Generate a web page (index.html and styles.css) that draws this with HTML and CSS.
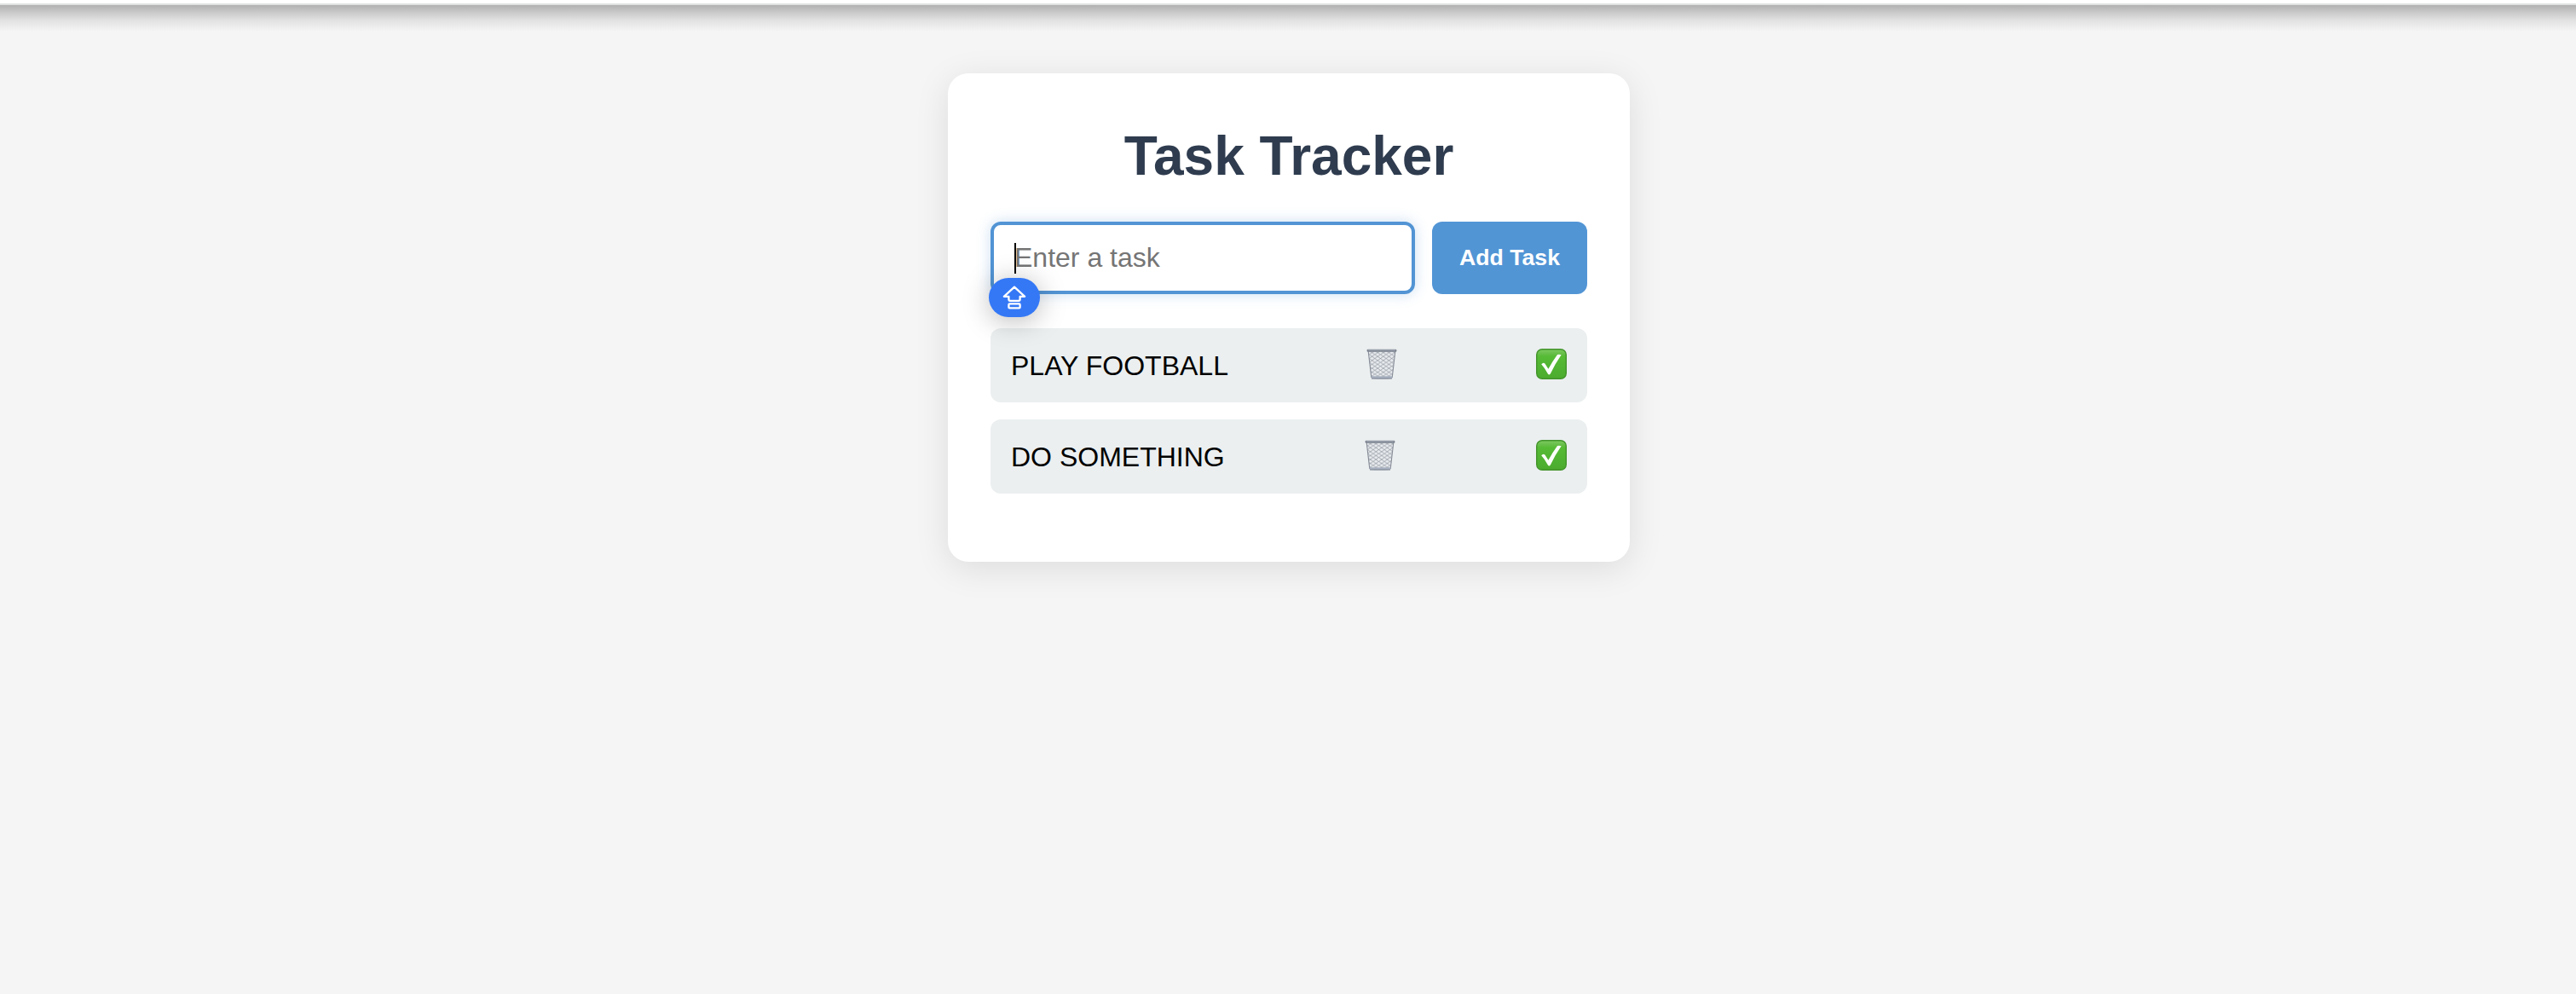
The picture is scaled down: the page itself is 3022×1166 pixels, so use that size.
FILE: index.html
```html
<!DOCTYPE html>
<html lang="en">
<head>
<meta charset="utf-8">
<title>Task Tracker</title>
<link rel="stylesheet" href="styles.css">
</head>
<body>
<svg class="symbols" aria-hidden="true">
  <defs>
    <linearGradient id="green" x1="0" y1="0" x2="0" y2="1">
      <stop offset="0" stop-color="#7ccb5e"/>
      <stop offset=".14" stop-color="#68bf4a"/>
      <stop offset=".24" stop-color="#56bb35"/>
      <stop offset="1" stop-color="#4bab2e"/>
    </linearGradient>
    <pattern id="mesh" width="6.6" height="4.6" patternUnits="userSpaceOnUse">
      <path d="M0 0L6.6 4.6M0 4.6L6.6 0" stroke="#8b919b" stroke-width=".75" fill="none"/>
    </pattern>
    <symbol id="bin" viewBox="0 0 36 36">
      <path d="M2.2 3L5.8 34.4H30.2L33.8 3Z" fill="#e9ecef"/>
      <path d="M2.2 3L5.8 34.4H30.2L33.8 3Z" fill="url(#mesh)"/>
      <path d="M2.2 3L5.8 34M33.8 3L30.2 34" stroke="#858b96" stroke-width="1.1" fill="none"/>
      <path d="M5.6 32.2H30.4L30.1 35Q18 36 5.9 35Z" fill="#a9b2c1"/>
      <path d="M6 35H30" stroke="#757c89" stroke-width=".9"/>
      <rect x=".6" y=".8" width="34.8" height="3" rx="1.2" fill="#7b838f"/>
      <path d="M2 1.8H34" stroke="#a8b0bb" stroke-width=".9"/>
    </symbol>
    <symbol id="check" viewBox="0 0 36 36">
      <rect x=".7" y=".7" width="34.6" height="34.6" rx="6.5" fill="url(#green)" stroke="#43942c" stroke-width="1.4"/>
      <path d="M6.2 18.2Q8.6 15.4 10.4 17.6L14.4 23.8Q19.5 14.5 25 7Q27.5 6.3 29.6 7.3Q22.5 17.5 16.8 29.4Q15.2 31.4 13.9 29.4Q10.3 22.7 6.2 18.2Z" fill="#fff"/>
    </symbol>
  </defs>
</svg>
<div class="toolbar-edge"></div>
<main class="card">
  <h1 class="title">Task Tracker</h1>
  <div class="form">
    <div class="field">
      <span class="caret"></span><span class="placeholder">Enter a task</span>
      <span class="caps">
        <svg class="caps-icon" viewBox="0 0 28 28" fill="none" stroke="#fff" stroke-width="2.3" stroke-linejoin="round"><path d="M14 1.6L1.8 12.8H7.4V16Q7.4 17.8 9 17.8H19Q20.6 17.8 20.6 16V12.8H26.2Z"/><rect x="7.4" y="21.4" width="13.2" height="5" rx="1"/></svg>
      </span>
    </div>
    <button class="add">Add Task</button>
  </div>
  <ul class="tasks">
    <li class="task"><span class="name">PLAY FOOTBALL</span><svg class="emoji"><use href="#bin"/></svg><svg class="emoji"><use href="#check"/></svg></li>
    <li class="task"><span class="name">DO SOMETHING</span><svg class="emoji"><use href="#bin"/></svg><svg class="emoji"><use href="#check"/></svg></li>
  </ul>
</main>
</body>
</html>
```
FILE: styles.css
```css
* { box-sizing: border-box; }
body {
  margin: 0;
  height: 1166px;
  overflow: hidden;
  background: #f5f5f5;
  font-family: "Liberation Sans", Arial, sans-serif;
  font-size: 32px;
}
.symbols { position: absolute; width: 0; height: 0; }
.toolbar-edge {
  height: 38px;
  border-top: 4px solid #fff;
  background: linear-gradient(#e0e2e1 2px, #b0b0b0 2px, #c8c8c8 10px, #e2e2e2 20px, #f5f5f5 33px);
}
.card {
  width: 800px;
  height: 573px;
  margin: 48px 0 0 1112px;
  padding: 50px;
  background: #fff;
  border-radius: 24px;
  box-shadow: 0 8px 40px rgba(0, 0, 0, .1);
}
.title {
  margin: 10px 0 40px;
  font-size: 64px;
  line-height: 74px;
  text-align: center;
  color: #2f3c4f;
}
.form { display: flex; gap: 20px; height: 85px; }
.field {
  position: relative;
  flex: 1;
  display: flex;
  align-items: center;
  padding-left: 24px;
  border: 4px solid #5294d4;
  border-radius: 12px;
  box-shadow: 0 0 16px rgba(82, 148, 212, .3);
}
.caret { width: 2px; height: 36px; margin-right: -2px; background: #000; }
.placeholder { line-height: 36px; padding-bottom: 2px; color: #757575; }
.caps {
  position: absolute;
  left: -6px;
  top: 62px;
  width: 60px;
  height: 46px;
  display: flex;
  align-items: center;
  justify-content: center;
  border-radius: 23px;
  background: #3478f6;
  box-shadow: 0 4px 32px rgba(0, 0, 0, .28);
}
.caps-icon { width: 28px; height: 28px; }
.add {
  width: 182px;
  padding: 0;
  border: 0;
  border-radius: 12px;
  background: #5295d5;
  color: #fff;
  font: bold 26.67px "Liberation Sans", Arial, sans-serif;
}
.tasks {
  display: grid;
  gap: 20px;
  margin: 40px 0 0;
  padding: 0;
  list-style: none;
}
.task {
  display: flex;
  align-items: center;
  justify-content: space-between;
  height: 87px;
  padding: 0 24px;
  border-radius: 12px;
  background: #ebeff0;
  color: #000;
}
.name { padding-top: 2px; }
.emoji { width: 36px; height: 36px; margin-bottom: 3px; }
```
